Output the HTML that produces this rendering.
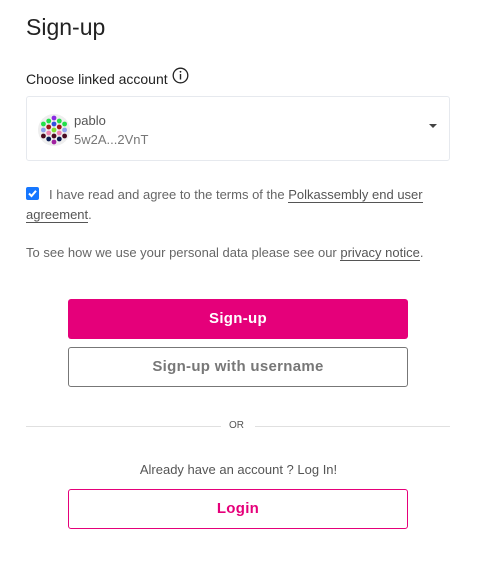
<!DOCTYPE html>
<html><head><style>
body{margin:0;background:#fff;font-family:"Liberation Sans",Arial,sans-serif;width:477px;height:562px;position:relative;overflow:hidden}
.a{position:absolute}
h1{position:absolute;left:26px;top:14px;margin:0;font-size:23px;font-weight:normal;color:#222}
.u{text-decoration:none;border-bottom:1px solid #555;color:#555}
.btn{position:absolute;left:68px;width:340px;box-sizing:border-box;border-radius:3px;text-align:center;font-weight:bold;font-size:15px;letter-spacing:.3px}
</style></head><body>
<h1>Sign-up</h1>
<div class="a" style="left:26px;top:71px;font-size:14px;color:#222">Choose linked account</div>
<svg class="a" style="left:172px;top:67px" width="17" height="17" viewBox="0 0 17 17"><circle cx="8.5" cy="8.5" r="7.3" fill="none" stroke="#222" stroke-width="1.3"/><rect x="7.8" y="7" width="1.4" height="5.5" fill="#222"/><circle cx="8.5" cy="4.8" r=".9" fill="#222"/></svg>
<div class="a" style="left:26px;top:96px;width:424px;height:65px;border:1px solid #e6e9ee;border-radius:3px;box-sizing:border-box"></div>
<svg class="a" style="left:38px;top:114px" width="32" height="32" viewBox="-16 -16 32 32">
<circle r="16" fill="#eee"/>
<g>
<circle cx="0" cy="-12" r="2.4" fill="#8a2be2"/>
<circle cx="-5.3" cy="-9" r="2.4" fill="#22e04a"/><circle cx="5.3" cy="-9" r="2.4" fill="#22e04a"/>
<circle cx="-10.6" cy="-6" r="2.4" fill="#22e04a"/><circle cx="0" cy="-6" r="2.4" fill="#3050e0"/><circle cx="10.6" cy="-6" r="2.4" fill="#22e04a"/>
<circle cx="-5.3" cy="-3" r="2.4" fill="#a01818"/><circle cx="5.3" cy="-3" r="2.4" fill="#a01818"/>
<circle cx="-10.6" cy="0" r="2.4" fill="#8ea0f0"/><circle cx="0" cy="0" r="2.4" fill="#7ee030"/><circle cx="10.6" cy="0" r="2.4" fill="#8ea0f0"/>
<circle cx="-5.3" cy="3" r="2.4" fill="#f080b0"/><circle cx="5.3" cy="3" r="2.4" fill="#f080b0"/>
<circle cx="-10.6" cy="6" r="2.4" fill="#4a0a20"/><circle cx="0" cy="6" r="2.4" fill="#4a0a20"/><circle cx="10.6" cy="6" r="2.4" fill="#4a0a20"/>
<circle cx="-5.3" cy="9" r="2.4" fill="#0a1a50"/><circle cx="5.3" cy="9" r="2.4" fill="#0a1a50"/>
<circle cx="0" cy="12" r="2.4" fill="#a020a0"/>
</g></svg>
<div class="a" style="left:74px;top:113px;font-size:13px;color:#555">pablo</div>
<div class="a" style="left:74px;top:132px;font-size:13px;color:#777">5w2A...2VnT</div>
<svg class="a" style="left:429px;top:124px" width="8" height="5"><path d="M0 0H8L4 4Z" fill="#444"/></svg>
<div class="a" style="left:26px;top:187px;width:13px;height:13px;background:#1677ff;border-radius:2px"><svg width="13" height="13"><path d="M3 6.5L5.5 9L10 3.8" fill="none" stroke="#fff" stroke-width="2"/></svg></div>
<div class="a" style="left:26px;top:185px;width:400px;font-size:13px;line-height:20px;color:#666;text-indent:23px">I have read and agree to the terms of the <span class="u">Polkassembly end user agreement</span>.</div>
<div class="a" style="left:26px;top:245px;font-size:13px;color:#666;white-space:nowrap">To see how we use your personal data please see our <span class="u">privacy notice</span>.</div>
<div class="btn" style="top:299px;height:40px;line-height:40px;background:#e5007a;color:#fff">Sign-up</div>
<div class="btn" style="top:347px;height:40px;line-height:38px;border:1px solid #777;color:#777">Sign-up with username</div>
<div class="a" style="left:26px;top:426px;width:195px;height:1px;background:#e0e0e0"></div>
<div class="a" style="left:255px;top:426px;width:195px;height:1px;background:#e0e0e0"></div>
<div class="a" style="left:229px;top:420px;font-size:10px;color:#555">OR</div>
<div class="a" style="left:0;width:477px;top:462px;text-align:center;font-size:13px;color:#555">Already have an account ? Log In!</div>
<div class="btn" style="top:489px;height:40px;line-height:38px;border:1px solid #e5007a;color:#e5007a">Login</div>
</body></html>
